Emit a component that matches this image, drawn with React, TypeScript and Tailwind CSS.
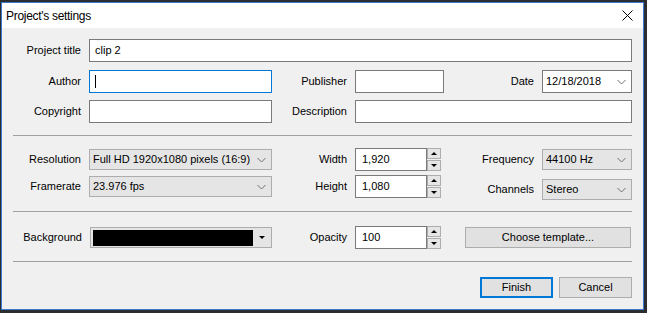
import React from "react";

function Label({ w, children }: { w: string; children: React.ReactNode }) {
  return <div className={`${w} shrink-0 pr-[8px] text-right text-black`}>{children}</div>;
}

function TextBox({ w, value, focused }: { w: string; value?: string; focused?: boolean }) {
  return (
    <div
      className={`${w} h-[23px] shrink-0 flex items-center bg-white border ${
        focused ? "border-[#0078d7]" : "border-[#7a7a7a]"
      } pl-[5px] text-black`}
    >
      {focused && <div className="w-px h-[13px] bg-black" />}
      {value}
    </div>
  );
}

function Chevron() {
  return (
    <svg width="9" height="6" viewBox="0 0 9 6" className="shrink-0">
      <path d="M0.5 1 L4.5 5 L8.5 1" fill="none" stroke="#707070" strokeWidth="1" />
    </svg>
  );
}

function Select({ w, value, white }: { w: string; value: string; white?: boolean }) {
  return (
    <div
      className={`${w} h-[21px] shrink-0 flex items-center justify-between border ${
        white ? "bg-white border-[#7a7a7a] h-[23px]" : "bg-[#e5e5e5] border-[#adadad]"
      } pl-[3px] pr-[5px] text-black`}
    >
      <span>{value}</span>
      <Chevron />
    </div>
  );
}

function Spin({ value }: { value: string }) {
  return (
    <div className="flex shrink-0">
      <div className="w-[72px] h-[23px] flex items-center bg-white border border-[#7a7a7a] pl-[6px] text-black">
        {value}
      </div>
      <div className="w-[14px] h-[23px] flex flex-col gap-px">
        <div className="flex-1 flex items-center justify-center bg-[#e5e5e5] border border-[#adadad]">
          <div className="w-0 h-0 border-l-[3px] border-r-[3px] border-b-[3px] border-l-transparent border-r-transparent border-b-black" />
        </div>
        <div className="flex-1 flex items-center justify-center bg-[#e5e5e5] border border-[#adadad]">
          <div className="w-0 h-0 border-l-[3px] border-r-[3px] border-t-[3px] border-l-transparent border-r-transparent border-t-black" />
        </div>
      </div>
    </div>
  );
}

function Separator() {
  return <div className="ml-[11px] w-[619px] h-px bg-[#a0a0a0]" />;
}

export default function App() {
  return (
    <div className="w-[647px] h-[313px] bg-[#2b2d30] pt-[2px] pl-px font-['Liberation_Sans',Arial,sans-serif] text-[11px] overflow-hidden">
      <div className="w-[643px] h-[308px] border border-[#3b78d0] bg-[#f0f0f0] flex flex-col">
        {/* title bar */}
        <div className="h-[25px] bg-white flex items-center justify-between pl-[4px] pr-[10px] shrink-0">
          <span className="text-[12px] tracking-[-0.3px] text-black">Project's settings</span>
          <svg width="11" height="11" viewBox="0 0 11 11">
            <path d="M0.5 0.5 L10.5 10.5 M10.5 0.5 L0.5 10.5" stroke="#000" strokeWidth="1" />
          </svg>
        </div>

        <div className="flex flex-col pt-[11px]">
          {/* project title */}
          <div className="flex items-center h-[23px]">
            <Label w="w-[87px]">Project title</Label>
            <TextBox w="w-[543px]" value="clip 2" />
          </div>

          {/* author / publisher / date */}
          <div className="flex items-center h-[23px] mt-[8px]">
            <Label w="w-[87px]">Author</Label>
            <TextBox w="w-[183px]" focused />
            <Label w="w-[83px]">Publisher</Label>
            <TextBox w="w-[89px]" />
            <Label w="w-[98px]">Date</Label>
            <Select w="w-[90px]" value="12/18/2018" white />
          </div>

          {/* copyright / description */}
          <div className="flex items-center h-[23px] mt-[7px]">
            <Label w="w-[87px]">Copyright</Label>
            <TextBox w="w-[183px]" />
            <Label w="w-[83px]">Description</Label>
            <TextBox w="w-[277px]" />
          </div>

          <div className="mt-[12px]">
            <Separator />
          </div>

          {/* resolution / width / frequency */}
          <div className="flex items-center h-[23px] mt-[12px]">
            <Label w="w-[87px]">Resolution</Label>
            <Select w="w-[183px]" value="Full HD 1920x1080 pixels (16:9)" />
            <Label w="w-[83px]">Width</Label>
            <Spin value="1,920" />
            <Label w="w-[101px]">Frequency</Label>
            <Select w="w-[90px]" value="44100 Hz" />
          </div>

          {/* framerate / height / channels */}
          <div className="flex items-center h-[23px] mt-[4px]">
            <Label w="w-[87px]">Framerate</Label>
            <Select w="w-[183px]" value="23.976 fps" />
            <Label w="w-[83px]">Height</Label>
            <Spin value="1,080" />
            <div className="flex items-center mt-[6px]">
              <Label w="w-[101px]">Channels</Label>
              <Select w="w-[90px]" value="Stereo" />
            </div>
          </div>

          <div className="mt-[13px]">
            <Separator />
          </div>

          {/* background / opacity / template */}
          <div className="flex items-center h-[23px] mt-[14px]">
            <Label w="w-[88px]">Background</Label>
            <div className="w-[182px] h-[21px] shrink-0 flex items-center bg-[#e5e5e5] border border-[#adadad] pl-[2px]">
              <div className="w-[160px] h-[16px] bg-black" />
              <div className="flex-1 flex justify-center">
                <div className="w-0 h-0 border-l-[3px] border-r-[3px] border-t-[3px] border-l-transparent border-r-transparent border-t-black" />
              </div>
            </div>
            <Label w="w-[83px]">Opacity</Label>
            <Spin value="100" />
            <div className="ml-[24px] w-[166px] h-[21px] shrink-0 flex items-center justify-center bg-[#e1e1e1] border border-[#adadad] text-black">
              Choose template...
            </div>
          </div>

          <div className="mt-[12px]">
            <Separator />
          </div>

          {/* buttons */}
          <div className="flex justify-end gap-[6px] pr-[11px] mt-[15px]">
            <div className="w-[73px] h-[21px] flex items-center justify-center bg-[#e1e1e1] border-2 border-[#0078d7] text-black">
              Finish
            </div>
            <div className="w-[73px] h-[21px] flex items-center justify-center bg-[#e1e1e1] border border-[#adadad] text-black">
              Cancel
            </div>
          </div>
        </div>
      </div>
    </div>
  );
}
